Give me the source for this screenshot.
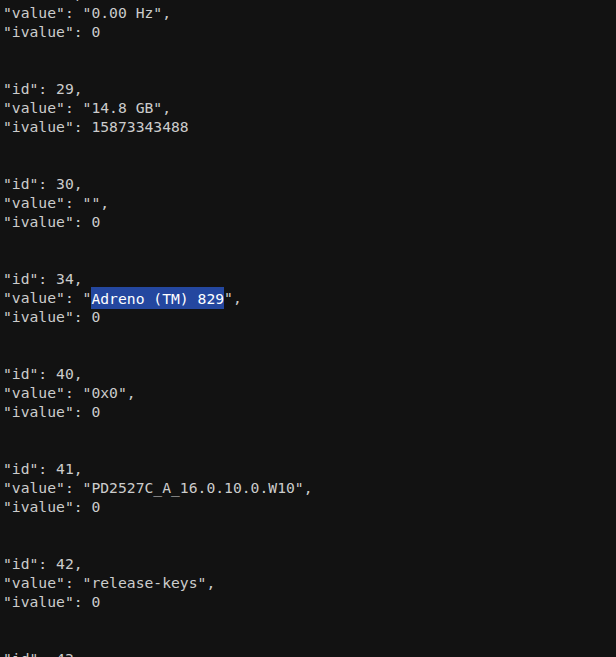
import React from 'react';

type Entry = { id: number; value: string; ivalue: string; selected?: boolean };

const entries: Entry[] = [
  { id: 28, value: '0.00 Hz', ivalue: '0' },
  { id: 29, value: '14.8 GB', ivalue: '15873343488' },
  { id: 30, value: '', ivalue: '0' },
  { id: 34, value: 'Adreno (TM) 829', ivalue: '0', selected: true },
  { id: 40, value: '0x0', ivalue: '0' },
  { id: 41, value: 'PD2527C_A_16.0.10.0.W10', ivalue: '0' },
  { id: 42, value: 'release-keys', ivalue: '0' },
  { id: 43, value: '', ivalue: '0' },
];

const Block = ({ entry }: { entry: Entry }) => (
  <div className="pb-[38px]">
    <div>"id": {entry.id},</div>
    <div>
      "value": "
      {entry.selected ? (
        <span className="bg-[#24479f] text-white py-[2.5px]">{entry.value}</span>
      ) : (
        entry.value
      )}
      ",
    </div>
    <div>"ivalue": {entry.ivalue}</div>
  </div>
);

const App = () => {
  return (
    <div className="h-[657px] w-[616px] overflow-hidden bg-[#121212]">
      <pre className="-mt-[16px] pl-[3px] text-[14.7px] leading-[19px] text-[#cccccc] whitespace-pre font-['DejaVu_Sans_Mono',monospace]">
        {entries.map((entry) => (
          <Block key={entry.id} entry={entry} />
        ))}
      </pre>
    </div>
  );
};

export default App;
